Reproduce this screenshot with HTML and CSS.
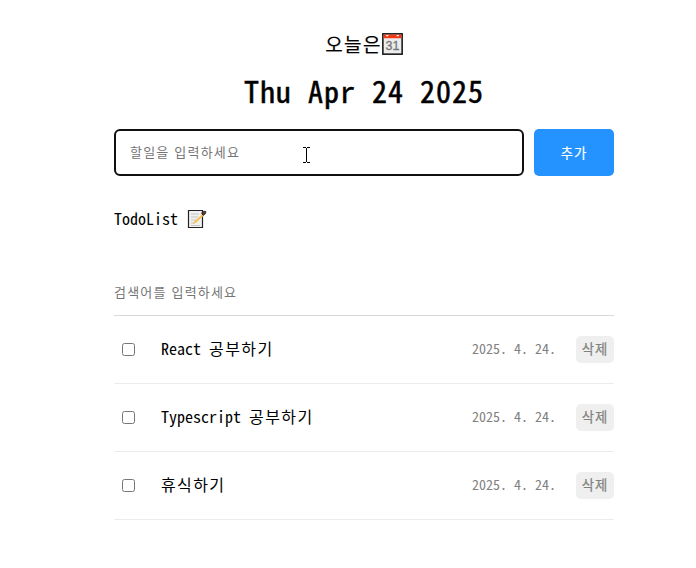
FILE: index.html
```html
<!DOCTYPE html>
<html lang="ko">
<head>
<meta charset="utf-8">
<title>TodoList</title>
<link rel="stylesheet" href="styles.css">
</head>
<body>
<main class="app">
  <header class="header">
    <h3 class="today"><span class="ko">오늘은</span><svg class="calendar" viewBox="0 0 20 21"><rect x=".8" y=".8" width="18.4" height="19.4" fill="#ededed" stroke="#181818" stroke-width="1.5"/><path d="M1.5 1.5h17v3.500h-17z" fill="#f03a17"/><path d="M4 2h2v1.200H4zM14 2h2v1.200h-2z" fill="#fff"/><text class="day" x="10" y="16.500" text-anchor="middle">31</text></svg></h3>
    <h1 class="date">Thu Apr 24 2025</h1>
  </header>
  <form class="editor">
    <input class="editor-input" placeholder="할일을 입력하세요">
    <button class="add" type="button">추가</button>
    <svg class="cursor" viewBox="0 0 7 16"><path d="M0 .5h3M4 .5h3M3.5 1v14M0 15.5h3M4 15.5h3" fill="none" stroke="#000"/></svg>
  </form>
  <section class="list">
    <h4 class="list-title"><span>TodoList</span><svg class="memo" viewBox="0 0 20 20"><path d="M1.500 1.500h14v17h-14z" fill="#f1f1f1" stroke="#222" stroke-width="1.2"/><path d="M4 5h8M4 8h7M4 11h5M4 14h4M4 16.500h9" stroke="#c4c4c4"/><path d="M6 15l1.500-2.800 7.500-7 1.500 1.600-7.500 7z" fill="#f7c250"/><path d="M14.500 4.200l2-2 2.300.3-.2 2-2.200 2z" fill="#5b3932" stroke="#222" stroke-width=".8"/></svg></h4>
    <input class="search" placeholder="검색어를 입력하세요">
    <div class="item"><input class="check" type="checkbox"><div class="content">React <span class="ko">공부하기</span></div><div class="when">2025. 4. 24.</div><button class="delete">삭제</button></div>
    <div class="item"><input class="check" type="checkbox"><div class="content">Typescript <span class="ko">공부하기</span></div><div class="when">2025. 4. 24.</div><button class="delete">삭제</button></div>
    <div class="item"><input class="check" type="checkbox"><div class="content"><span class="ko">휴식하기</span></div><div class="when">2025. 4. 24.</div><button class="delete">삭제</button></div>
  </section>
</main>
</body>
</html>
```
FILE: styles.css
```css
* { box-sizing: border-box; }
body { margin: 0; background: #fff; color: #000; font-family: "Noto Sans Mono CJK KR", "DejaVu Sans Mono", "Noto Sans CJK KR", monospace; }
input, button { font-family: "Noto Sans CJK KR", sans-serif; margin: 0; }
h1, h3, h4 { margin: 0; }
.app { width: 500px; margin: 0 0 0 114px; padding-top: 30px; }
.header { display: flex; flex-direction: column; align-items: center; }
.today { display: flex; align-items: center; height: 28px; font-size: 19px; font-weight: 400; }
.today .ko { letter-spacing: 1.3px; padding-bottom: 1px; -webkit-text-stroke: .2px #000; }
.calendar { width: 21px; height: 22px; }
.day { font: 12px "Liberation Sans", sans-serif; fill: #777; stroke: #777; stroke-width: .3px; }
.date { height: 40px; margin-top: 12px; font-size: 30px; letter-spacing: 1px; line-height: 40px; font-weight: 500; white-space: pre; -webkit-text-stroke: .5px #000; }
.editor { position: relative; display: flex; gap: 10px; height: 47px; margin-top: 19px; }
.editor-input { flex: 1; min-width: 0; border: 2px solid #101010; border-radius: 6px; padding: 0 14px 2px; font-size: 13px; letter-spacing: 1.2px; outline: 0; }
.editor-input::placeholder, .search::placeholder { color: #757575; opacity: 1; }
.add { width: 80px; border: 0; border-radius: 5px; background: #2492ff; color: #fff; font-size: 13.333px; letter-spacing: 1px; font-weight: 400; padding: 0 0 1px; -webkit-text-stroke: .2px #fff; }
.cursor { position: absolute; left: 189px; top: 18px; width: 7px; height: 16px; }
.list-title { display: flex; align-items: center; gap: 9px; height: 24px; margin-top: 31px; font-size: 16px; font-weight: 500; }
.list-title span { padding-bottom: 2px; }
.memo { width: 20px; height: 20px; }
.search { display: block; width: 100%; height: 47px; margin-top: 38px; border: 0; border-bottom: 1px solid #d8d8d8; padding: 0 0 2px; font-size: 13px; letter-spacing: 1.2px; outline: 0; }
.item { display: flex; align-items: center; height: 68px; border-bottom: 1px solid #ececec; }
.check { width: 13px; height: 13px; margin: 0 26px 0 8px; }
.content { flex: 1; padding-bottom: 3px; font-size: 16px; }
.content .ko { letter-spacing: 1.4px; }
.when { margin-right: 20px; padding-bottom: 3px; color: gray; font-size: 14px; }
.delete { width: 38px; height: 27px; border: 0; border-radius: 5px; background: #efefef; color: gray; font-size: 13.333px; font-weight: 400; letter-spacing: 1px; padding: 0 0 2px; -webkit-text-stroke: .2px gray; }
```
